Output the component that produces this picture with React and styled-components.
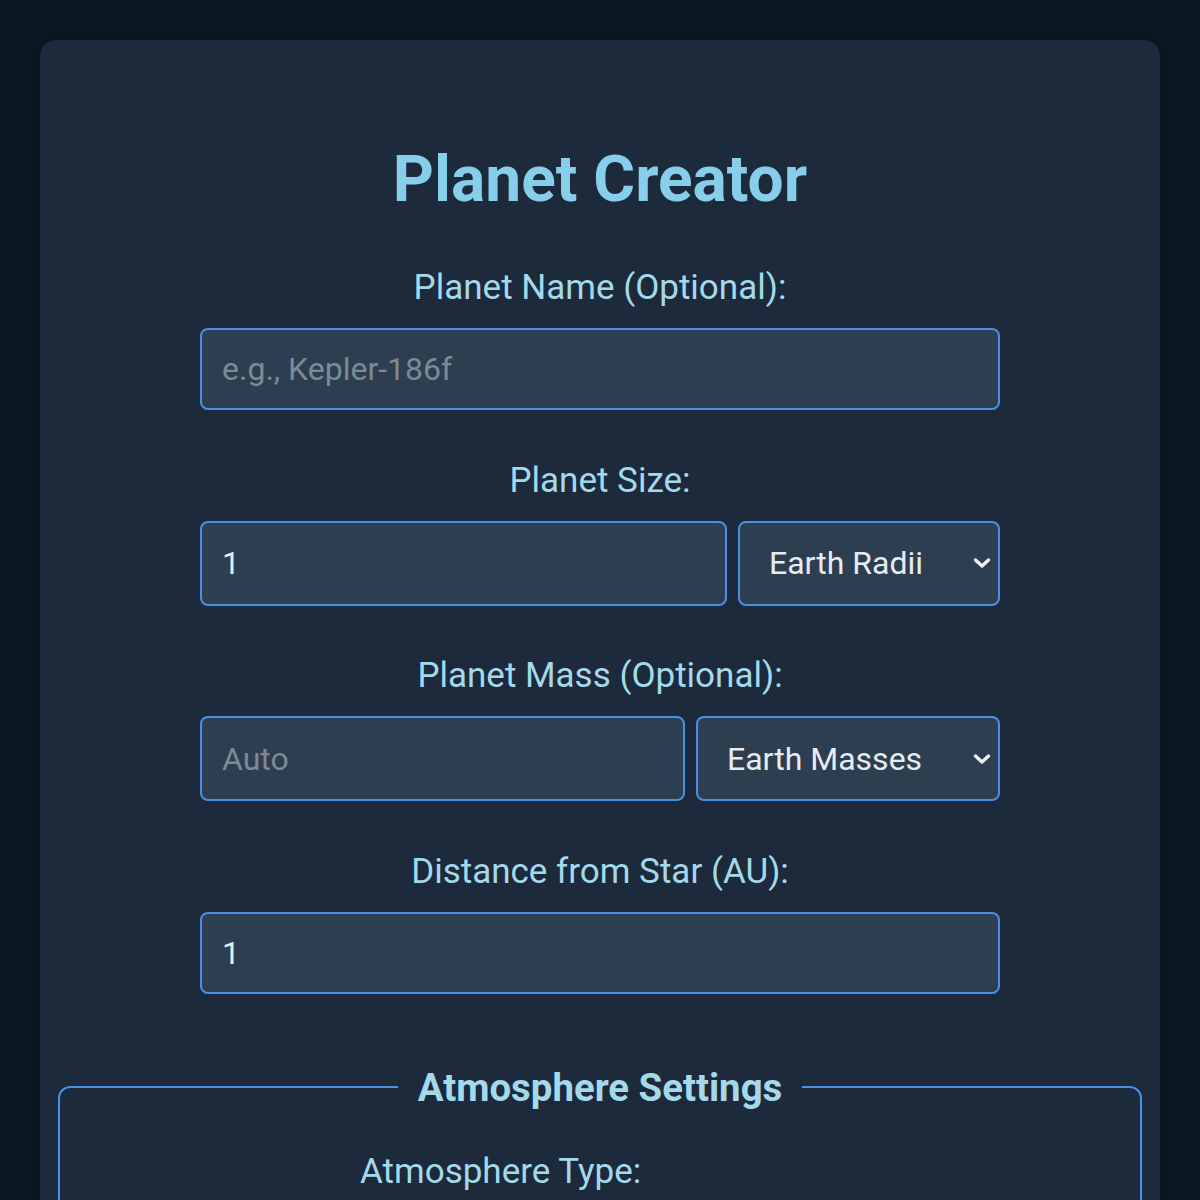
import React from "react";
import styled, { createGlobalStyle } from "styled-components";

const GlobalStyle = createGlobalStyle`
  html, body {
    margin: 0;
    padding: 0;
    background: #0c1824;
    font-family: Roboto, "Liberation Sans", sans-serif;
  }
  * {
    box-sizing: border-box;
  }
`;

const Page = styled.div`
  padding: 40px;
  min-height: 1200px;
`;

const Card = styled.div`
  background: #1c2a3c;
  border-radius: 16px;
  padding: 100px 18px 40px;
  box-shadow: 0 4px 24px rgba(0, 0, 0, 0.35);
`;

const Title = styled.h1`
  margin: 0 0 47px;
  text-align: center;
  font-size: 64px;
  line-height: 80px;
  font-weight: 700;
  color: #87ceeb;
`;

const Group = styled.div`
  max-width: 800px;
  margin: 0 auto 49.5px;
`;

const Label = styled.label`
  display: block;
  text-align: center;
  font-size: 35px;
  line-height: 41px;
  color: #a4d9ea;
  margin-bottom: 20px;
`;

const Input = styled.input`
  display: block;
  width: 100%;
  flex: 1;
  min-width: 0;
  font-family: inherit;
  font-size: 32px;
  line-height: 38px;
  padding: 20px 20px;
  color: #e6ecf0;
  background: #2c3e50;
  border: 2px solid #4a90e2;
  border-radius: 8px;
  outline: none;

  &::placeholder {
    color: #7d8a93;
  }
`;

const Row = styled.div`
  display: flex;
  gap: 11px;
  align-items: stretch;
`;

const SelectWrap = styled.div`
  position: relative;
  width: ${(p) => p.$width}px;
  flex: none;
`;

const Select = styled.select`
  appearance: none;
  width: 100%;
  height: 100%;
  font-family: inherit;
  font-size: 32px;
  line-height: 38px;
  padding: 21.5px 60px 21.5px 29px;
  color: #e6ecf0;
  background: #2c3e50;
  border: 2px solid #4a90e2;
  border-radius: 8px;
  outline: none;
`;

const Chevron = styled.svg`
  position: absolute;
  right: 7px;
  top: 50%;
  transform: translateY(-50%);
  pointer-events: none;
`;

const Fieldset = styled.fieldset`
  margin: 71px 0 0;
  padding: 41px 20px 40px;
  border: 2px solid #4a90e2;
  border-radius: 12px;
  min-height: 200px;
`;

const Legend = styled.legend`
  margin: 0 auto;
  padding: 0 20px;
  font-size: 38.4px;
  font-weight: 700;
  color: #a4d9ea;
`;

const SubGroup = styled.div`
  max-width: 480px;
  margin: 0 auto;
`;

const SubLabel = styled(Label)`
  text-align: left;
`;

const Arrow = () => (
  <Chevron width="22" height="22" viewBox="0 0 22 22">
    <path
      d="M4.5 8 L11 14 L17.5 8"
      fill="none"
      stroke="#eef2f4"
      strokeWidth="3.4"
      strokeLinecap="round"
      strokeLinejoin="round"
    />
  </Chevron>
);

const App = () => {
  return (
    <>
      <GlobalStyle />
      <Page>
        <Card>
          <Title>Planet Creator</Title>

          <Group>
            <Label htmlFor="name">Planet Name (Optional):</Label>
            <Input id="name" placeholder="e.g., Kepler-186f" />
          </Group>

          <Group>
            <Label htmlFor="size">Planet Size:</Label>
            <Row>
              <Input id="size" defaultValue="1" />
              <SelectWrap $width={262}>
                <Select defaultValue="earth">
                  <option value="earth">Earth Radii</option>
                  <option value="jupiter">Jupiter Radii</option>
                  <option value="km">Kilometers</option>
                </Select>
                <Arrow />
              </SelectWrap>
            </Row>
          </Group>

          <Group>
            <Label htmlFor="mass">Planet Mass (Optional):</Label>
            <Row>
              <Input id="mass" placeholder="Auto" />
              <SelectWrap $width={304}>
                <Select defaultValue="earth">
                  <option value="earth">Earth Masses</option>
                  <option value="jupiter">Jupiter Masses</option>
                  <option value="kg">Kilograms</option>
                </Select>
                <Arrow />
              </SelectWrap>
            </Row>
          </Group>

          <Group>
            <Label htmlFor="distance">Distance from Star (AU):</Label>
            <Input id="distance" defaultValue="1" />
          </Group>

          <Fieldset>
            <Legend>Atmosphere Settings</Legend>
            <SubGroup>
              <SubLabel htmlFor="atmo">Atmosphere Type:</SubLabel>
            </SubGroup>
          </Fieldset>
        </Card>
      </Page>
    </>
  );
};

export default App;
